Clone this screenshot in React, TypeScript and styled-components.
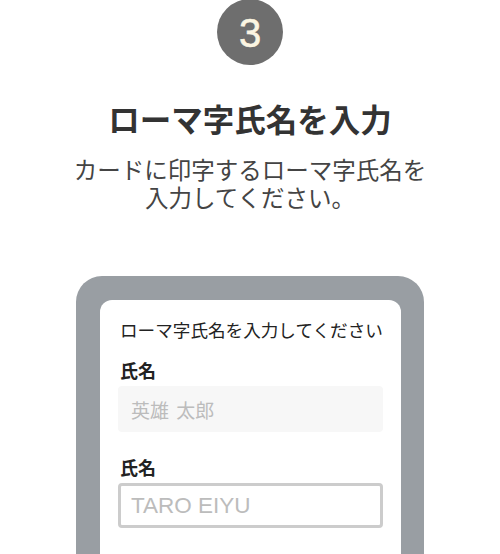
import React from "react";
import styled, { createGlobalStyle } from "styled-components";

const Global = createGlobalStyle`
  html, body { margin: 0; padding: 0; background: #ffffff; }
  body { font-family: "Noto Sans CJK JP", "Noto Sans", sans-serif; color: #333333; }
  * { box-sizing: border-box; }
`;

const Page = styled.main`
  width: 500px;
  height: 554px;
  overflow: hidden;
  display: flex;
  flex-direction: column;
  align-items: center;
`;

const StepBadge = styled.div`
  width: 66px;
  height: 66px;
  margin-top: -1px;
  border-radius: 50%;
  background: #6e6e6e;
  color: #fbf5e2;
  display: flex;
  align-items: center;
  justify-content: center;
  font-family: "Liberation Sans", Arial, sans-serif;
  font-size: 40px;
  line-height: 1;
  -webkit-text-stroke: 0.6px #fbf5e2;
  padding-top: 1px;
`;

const Title = styled.h1`
  margin: 31px 0 0;
  font-size: 31.5px;
  line-height: 44px;
  font-weight: 700;
  color: #333333;
`;

const Lead = styled.p`
  margin: 15px 0 0;
  font-size: 23.5px;
  line-height: 28px;
  font-weight: 400;
  color: #444444;
  text-align: center;
  white-space: nowrap;
`;

const Frame = styled.section`
  margin-top: 65px;
  width: 348px;
  flex: 1;
  padding: 24px 24px 0;
  background: #999ea3;
  border-radius: 26px 26px 0 0;
  display: flex;
`;

const Screen = styled.div`
  flex: 1;
  background: #ffffff;
  border-radius: 12px 12px 0 0;
  padding: 17px 18px 0;
  display: flex;
  flex-direction: column;
`;

const Prompt = styled.div`
  font-size: 17.6px;
  line-height: 26px;
  color: #222222;
  padding-left: 2px;
  white-space: nowrap;
`;

const Label = styled.div<{ $gap: number }>`
  margin-top: ${(p) => p.$gap}px;
  font-size: 18px;
  line-height: 24px;
  font-weight: 700;
  color: #222222;
  padding-left: 2px;
`;

const Field = styled.div<{ $variant: "filled" | "outlined" }>`
  margin-top: 4px;
  height: ${(p) => (p.$variant === "filled" ? 46 : 45)}px;
  border-radius: 4px;
  display: flex;
  align-items: center;
  padding-left: ${(p) => (p.$variant === "filled" ? 13 : 10)}px;
  background: ${(p) => (p.$variant === "filled" ? "#f7f7f7" : "#ffffff")};
  border: ${(p) => (p.$variant === "filled" ? "none" : "3px solid #cccccc")};
  color: #bcbcbc;
  font-size: ${(p) => (p.$variant === "filled" ? 19 : 22.5)}px;
  word-spacing: ${(p) => (p.$variant === "filled" ? 3 : 0)}px;
  font-family: ${(p) =>
    p.$variant === "filled"
      ? '"Noto Sans CJK JP", sans-serif'
      : '"Liberation Sans", Arial, sans-serif'};
`;

export default function App() {
  return (
    <>
      <Global />
      <Page>
        <StepBadge>3</StepBadge>
        <Title>ローマ字氏名を入力</Title>
        <Lead>
          カードに印字するローマ字氏名を
          <br />
          入力してください。
        </Lead>
        <Frame>
          <Screen>
            <Prompt>ローマ字氏名を入力してください</Prompt>
            <Label $gap={15}>氏名</Label>
            <Field $variant="filled">英雄 太郎</Field>
            <Label $gap={23}>氏名</Label>
            <Field $variant="outlined">TARO EIYU</Field>
          </Screen>
        </Frame>
      </Page>
    </>
  );
}
